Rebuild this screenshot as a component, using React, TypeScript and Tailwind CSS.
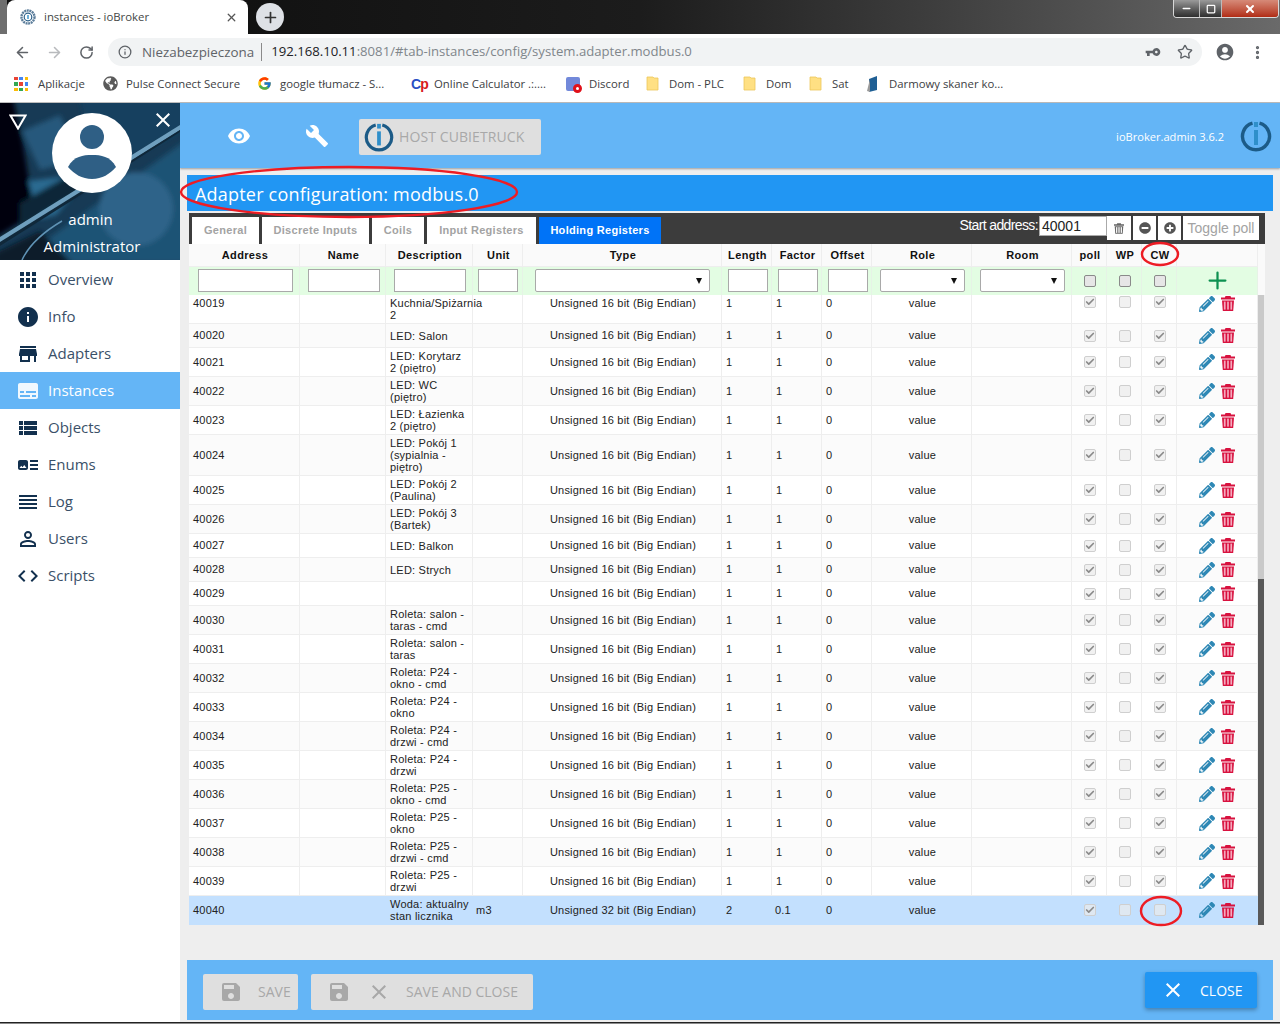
import { ArrowLeft, ArrowRight, RotateCw, Info, Star, EllipsisVertical, X, Plus, Check, Minus, Square } from "lucide-react"
import {
  MdAccountCircle,
  MdApps,
  MdArtTrack,
  MdBuild,
  MdClose,
  MdCode,
  MdInfo,
  MdPersonOutline,
  MdReorder,
  MdSave,
  MdStore,
  MdSubtitles,
  MdViewList,
  MdVisibility,
  MdVpnKey,
} from "react-icons/md"
import { FaGlobeAmericas, FaMinusCircle, FaPencilAlt, FaPlusCircle } from "react-icons/fa"
import { FcGoogle } from "react-icons/fc"

const COLS = "grid grid-cols-[111px_86px_87px_50px_199px_50px_50px_50px_100px_100px_35px_35px_35px_81px]"

type Row = { addr: string; desc: string[]; h: string; top?: boolean }

const rows: Row[] = [
  { addr: "40019", desc: ["Kuchnia/Spiżarnia", "2"], h: "h-[29px]", top: true },
  { addr: "40020", desc: ["LED: Salon"], h: "h-[24px]" },
  { addr: "40021", desc: ["LED: Korytarz", "2 (piętro)"], h: "h-[29px]" },
  { addr: "40022", desc: ["LED: WC", "(piętro)"], h: "h-[29px]" },
  { addr: "40023", desc: ["LED: Łazienka", "2 (piętro)"], h: "h-[29px]" },
  { addr: "40024", desc: ["LED: Pokój 1", "(sypialnia -", "piętro)"], h: "h-[41px]" },
  { addr: "40025", desc: ["LED: Pokój 2", "(Paulina)"], h: "h-[29px]" },
  { addr: "40026", desc: ["LED: Pokój 3", "(Bartek)"], h: "h-[29px]" },
  { addr: "40027", desc: ["LED: Balkon"], h: "h-[24px]" },
  { addr: "40028", desc: ["LED: Strych"], h: "h-[24px]" },
  { addr: "40029", desc: [], h: "h-[24px]" },
  { addr: "40030", desc: ["Roleta: salon -", "taras - cmd"], h: "h-[29px]" },
  { addr: "40031", desc: ["Roleta: salon -", "taras"], h: "h-[29px]" },
  { addr: "40032", desc: ["Roleta: P24 -", "okno - cmd"], h: "h-[29px]" },
  { addr: "40033", desc: ["Roleta: P24 -", "okno"], h: "h-[29px]" },
  { addr: "40034", desc: ["Roleta: P24 -", "drzwi - cmd"], h: "h-[29px]" },
  { addr: "40035", desc: ["Roleta: P24 -", "drzwi"], h: "h-[29px]" },
  { addr: "40036", desc: ["Roleta: P25 -", "okno - cmd"], h: "h-[29px]" },
  { addr: "40037", desc: ["Roleta: P25 -", "okno"], h: "h-[29px]" },
  { addr: "40038", desc: ["Roleta: P25 -", "drzwi - cmd"], h: "h-[29px]" },
  { addr: "40039", desc: ["Roleta: P25 -", "drzwi"], h: "h-[29px]" },
]

const menu = [
  { label: "Overview", icon: <MdApps className="w-[24px] h-[24px]" /> },
  { label: "Info", icon: <MdInfo className="w-[24px] h-[24px]" /> },
  { label: "Adapters", icon: <MdStore className="w-[24px] h-[24px]" /> },
  { label: "Instances", icon: <MdSubtitles className="w-[24px] h-[24px]" />, active: true },
  { label: "Objects", icon: <MdViewList className="w-[24px] h-[24px]" /> },
  { label: "Enums", icon: <MdArtTrack className="w-[24px] h-[24px]" /> },
  { label: "Log", icon: <MdReorder className="w-[24px] h-[24px]" /> },
  { label: "Users", icon: <MdPersonOutline className="w-[24px] h-[24px]" /> },
  { label: "Scripts", icon: <MdCode className="w-[24px] h-[24px]" /> },
]

function Logo({ size }: { size: string }) {
  return (
    <svg viewBox="0 0 32 32" className={size}>
      <path d="M12.5 3.2a13.5 13.5 0 1 0 7 0" fill="none" stroke="#1c5b87" strokeWidth="3.4" />
      <rect x="14" y="10" width="4" height="15" fill="#2f8fca" />
      <rect x="14" y="2" width="4" height="5" fill="#2f8fca" />
    </svg>
  )
}

function Folder() {
  return (
    <svg viewBox="0 0 13 15" className="w-[13px] h-[15px]">
      <path d="M1 1h6l1 1h4v12H1z" fill="#ffe083" stroke="#ecc65a" strokeWidth="0.8" />
    </svg>
  )
}

function Trash({ className, stripe }: { className: string; stripe: string }) {
  return (
    <svg viewBox="0 0 14 15" className={className} fill="currentColor">
      <path d="M4.5 0h5l.6 1.4H14v2.2H0V1.4h3.9z" />
      <path d="M1 4.4h12L12.2 15H1.8z" />
      <rect x="2.9" y="5.6" width="1.7" height="8" fill={stripe} />
      <rect x="6.15" y="5.6" width="1.7" height="8" fill={stripe} />
      <rect x="9.4" y="5.6" width="1.7" height="8" fill={stripe} />
    </svg>
  )
}

function Bookmark({ w, icon, label, iconW = "w-[23px]" }: { w: string; icon: React.ReactNode; label: string; iconW?: string }) {
  return (
    <div className={`flex items-center shrink-0 ${w}`}>
      <div className={`flex items-center ${iconW}`}>{icon}</div>
      <span className="whitespace-nowrap">{label}</span>
    </div>
  )
}

function BrowserChrome() {
  return (
    <div className="font-['Open_Sans',sans-serif] text-[#444746]">
      <div className="h-[34px] flex bg-gradient-to-r from-[#0c0c0c] via-[#1c1c1c] to-[#6a6a6a]">
        <div className="w-[7px] bg-[#6e6e6e]" />
        <div className="w-[241px] bg-white rounded-t-[8px] flex items-center pl-[13px] pr-[10px] text-[11.4px]">
          <svg viewBox="0 0 16 16" className="w-[16px] h-[16px] mr-[8px]">
            <circle cx="8" cy="8" r="6.5" fill="none" stroke="#5e7f9c" strokeWidth="2.4" strokeDasharray="2 0.6" />
            <circle cx="8" cy="8" r="3.8" fill="none" stroke="#2a5f89" strokeWidth="1.2" />
            <rect x="7.3" y="6" width="1.4" height="4" fill="#2f8fca" />
          </svg>
          <span className="flex-1">instances - ioBroker</span>
          <X className="w-[13px] h-[13px] text-[#555]" strokeWidth={2.4} />
        </div>
        <div className="ml-[8px] mt-[3px] w-[28px] h-[28px] rounded-full bg-[#dee1e6] flex items-center justify-center">
          <Plus className="w-[17px] h-[17px] text-[#333]" strokeWidth={2.4} />
        </div>
        <div className="flex-1" />
        <div className="w-[106px] mr-[1px] h-[18px] flex rounded-b-[4px] border border-t-0 border-[#d8d8d8] overflow-hidden">
          <div className="w-[26px] bg-gradient-to-b from-[#9a9a9a] to-[#2f2f2f] flex items-center justify-center border-r border-[#bbb]">
            <Minus className="w-[11px] h-[11px] text-white" strokeWidth={3.5} />
          </div>
          <div className="w-[22px] bg-gradient-to-b from-[#9a9a9a] to-[#2f2f2f] flex items-center justify-center border-r border-[#bbb]">
            <Square className="w-[10px] h-[10px] text-white" strokeWidth={3} />
          </div>
          <div className="flex-1 bg-gradient-to-b from-[#d68a78] to-[#b02a12] flex items-center justify-center">
            <X className="w-[12px] h-[12px] text-white" strokeWidth={4} />
          </div>
        </div>
      </div>
      <div className="h-[34px] bg-white flex items-center pl-[14px] pr-[14px] pt-[2px]">
        <ArrowLeft className="w-[17px] h-[17px] text-[#5f6368]" strokeWidth={2.2} />
        <ArrowRight className="w-[17px] h-[17px] text-[#b8babd] ml-[15px]" strokeWidth={2.2} />
        <RotateCw className="w-[15px] h-[15px] text-[#5f6368] ml-[16px]" strokeWidth={2.4} />
        <div className="ml-[14px] w-[1095px] h-[28px] rounded-full bg-[#f1f3f4] flex items-center pl-[10px] pr-[9px]">
          <Info className="w-[14px] h-[14px] text-[#5f6368]" strokeWidth={2.2} />
          <span className="ml-[10px] text-[#5f6368] text-[13.4px]">Niezabezpieczona</span>
          <span className="ml-[7px] w-px h-[18px] bg-[#8a8a8a]" />
          <span className="ml-[9px] text-[#202124] text-[13.15px]">192.168.10.11</span>
          <span className="text-[#80868b] text-[13.15px]">:8081/#tab-instances/config/system.adapter.modbus.0</span>
          <div className="flex-1" />
          <MdVpnKey className="w-[16px] h-[16px] text-[#5f6368] -scale-x-100" />
          <Star className="w-[16px] h-[16px] text-[#5f6368] ml-[16px]" strokeWidth={2} />
        </div>
        <MdAccountCircle className="w-[20px] h-[20px] text-[#5f6368] ml-[13px]" />
        <EllipsisVertical className="w-[17px] h-[17px] text-[#5f6368] ml-[14px]" strokeWidth={2.6} />
      </div>
      <div className="h-[35px] bg-white flex items-center pl-[14px] pb-[2px] text-[11.35px] text-[#3c4043] border-b border-[#bdbdbd]">
        <Bookmark
          w="w-[89px]"
          iconW="w-[24px]"
          label="Aplikacje"
          icon={
            <div className="grid grid-cols-3 gap-[2px] w-[14px]">
              <i className="w-[3.5px] h-[3.5px] bg-[#ea4335]" />
              <i className="w-[3.5px] h-[3.5px] bg-[#4285f4]" />
              <i className="w-[3.5px] h-[3.5px] bg-[#fbbc05]" />
              <i className="w-[3.5px] h-[3.5px] bg-[#34a853]" />
              <i className="w-[3.5px] h-[3.5px] bg-[#ea4335]" />
              <i className="w-[3.5px] h-[3.5px] bg-[#4285f4]" />
              <i className="w-[3.5px] h-[3.5px] bg-[#fbbc05]" />
              <i className="w-[3.5px] h-[3.5px] bg-[#34a853]" />
              <i className="w-[3.5px] h-[3.5px] bg-[#fbbc05]" />
            </div>
          }
        />
        <Bookmark w="w-[154px]" label="Pulse Connect Secure" icon={<FaGlobeAmericas className="w-[15px] h-[15px] text-[#5a5a5a]" />} />
        <Bookmark w="w-[154px]" label="google tłumacz - S..." icon={<FcGoogle className="w-[15px] h-[15px]" />} />
        <Bookmark
          w="w-[155px]"
          label="Online Calculator .:...."
          icon={
            <span className="font-['Liberation_Sans',sans-serif] font-bold text-[14px] leading-none tracking-[-1px]">
              <span className="text-[#2a4fc4]">C</span>
              <span className="text-[#d81c1c]">p</span>
            </span>
          }
        />
        <Bookmark
          w="w-[80px]"
          label="Discord"
          icon={
            <div className="relative w-[14px] h-[14px] rounded-[2px] bg-[#7289da]">
              <i className="absolute left-[7px] top-[7px] w-[9px] h-[9px] rounded-full bg-[#e0101a] border-[2px] border-[#e0101a]" />
              <i className="absolute left-[10px] top-[10px] w-[3px] h-[3px] rounded-full bg-white" />
            </div>
          }
        />
        <Bookmark w="w-[97px]" label="Dom - PLC" icon={<Folder />} />
        <Bookmark w="w-[66px]" label="Dom" icon={<Folder />} />
        <Bookmark w="w-[57px]" label="Sat" icon={<Folder />} />
        <Bookmark
          w="w-[150px]"
          label="Darmowy skaner ko..."
          icon={
            <svg viewBox="0 0 14 16" className="w-[14px] h-[16px]">
              <path d="M3 3l8-3v14l-8 2z" fill="#1f5f94" />
              <path d="M1 15l3-12v13z" fill="#9a9a9a" />
            </svg>
          }
        />
      </div>
    </div>
  )
}

function SidebarHead() {
  return (
    <div className="relative h-[157px] overflow-hidden flex flex-col items-center">
      <svg viewBox="0 0 180 157" className="absolute inset-0 w-full h-full">
        <defs>
          <filter id="soft">
            <feGaussianBlur stdDeviation="2.5" />
          </filter>
        </defs>
        <rect width="180" height="157" fill="#173a55" />
        <g filter="url(#soft)">
          <path d="M-5-5h18l10 45 8 50-12 30-24 15z" fill="#02060b" />
          <path d="M22 28l38-16 20 45-40 10z" fill="#25597c" />
          <path d="M80-5h105v30L130 55 92 62z" fill="#16405e" />
          <path d="M28 78l32-4 20 10-24 28-16 4z" fill="#2a6a91" />
          <path d="M20 100L90 60l30 5-100 60z" fill="#0c2538" />
          <path d="M14 160L185 38v122z" fill="#1d5275" />
          <circle cx="136" cy="106" r="37" fill="#2f6389" />
          <path d="M-5 150l45-22 34 34H-5z" fill="#071a2a" />
        </g>
        <path d="M0 134L180 22v5L0 141z" fill="#6f9fbe" />
        <path d="M0 139L180 27v2L0 143z" fill="#10283a" />
        <path d="M22 157C30 140 45 128 62 118" fill="none" stroke="#5f93b5" strokeWidth="1.5" />
      </svg>
      <svg viewBox="0 0 18 16" className="absolute left-[9px] top-[11px] w-[18px] h-[16px]">
        <path d="M1.5 1.5h15L9 14.5z" fill="none" stroke="#fff" strokeWidth="2" />
      </svg>
      <MdClose className="absolute right-[5px] top-[5px] w-[24px] h-[24px] text-white" />
      <svg viewBox="0 0 80 80" className="relative mt-[10px] ml-[4px] w-[80px] h-[80px] shrink-0">
        <circle cx="40" cy="40" r="40" fill="#fff" />
        <circle cx="40" cy="24" r="12" fill="#2f5f85" />
        <path d="M16 54C22 43 31 42 40 42s18 1 24 12C58 61 50 66 40 66S22 61 16 54z" fill="#2f5f85" />
      </svg>
      <div className="relative mt-[16px] ml-[1px] text-[15px] leading-[20px] text-white">admin</div>
      <div className="relative mt-[7px] ml-[4px] text-[15px] leading-[20px] text-white">Administrator</div>
    </div>
  )
}

function Sidebar() {
  return (
    <div className="w-[180px] shrink-0 bg-white font-['Open_Sans',sans-serif]">
      <SidebarHead />
      <div className="pt-[1px]">
        {menu.map((m) => (
          <div
            key={m.label}
            className={`h-[37px] flex items-center pl-[16px] text-[15px] ${
              m.active ? "bg-[#64b5f6] text-white" : "text-[#3a5068]"
            }`}
          >
            <span className={`w-[32px] flex ${m.active ? "text-white/90" : "text-[#12304e]"}`}>{m.icon}</span>
            {m.label}
          </div>
        ))}
      </div>
    </div>
  )
}

function Tab({ w, label, active }: { w: string; label: string; active?: boolean }) {
  return (
    <div
      className={`h-[27px] flex items-center justify-center font-bold tracking-[0.3px] ${w} ${
        active ? "bg-[#0073f7] text-white" : "bg-white text-[#a3a3a3]"
      }`}
    >
      {label}
    </div>
  )
}

function ToolBtn({ w, children }: { w: string; children: React.ReactNode }) {
  return <div className={`h-[24px] bg-white flex items-center justify-center ${w}`}>{children}</div>
}

function Th({ label }: { label?: string }) {
  return (
    <div className="flex items-center justify-center pl-[2px] border-r border-b border-[#eeeeee] font-bold tracking-[0.35px] text-[#111]">
      {label}
    </div>
  )
}

function FilterInput({ w }: { w: string }) {
  return <div className={`h-[23px] bg-white border border-[#a9a9a9] ${w}`} />
}

function FilterSelect({ w }: { w: string }) {
  return (
    <div className={`h-[23px] bg-white border border-[#a9a9a9] rounded-[2px] flex items-center justify-end pr-[7px] ${w}`}>
      <i className="w-0 h-0 border-x-[3.5px] border-x-transparent border-t-[6px] border-t-[#111]" />
    </div>
  )
}

function FilterCell({ children, className }: { children?: React.ReactNode; className?: string }) {
  return <div className={`flex border-r border-b border-[#e6f3e6] items-center pb-[1px] ${className ?? ""}`}>{children}</div>
}

function Box({ checked, head }: { checked?: boolean; head?: boolean }) {
  if (head) return <div className="w-[12px] h-[12px] rounded-[2px] bg-[#e6e6e6] border border-[#8a8a8a]" />
  return (
    <div className="w-[12px] h-[12px] rounded-[2px] bg-[#ebebeb]/70 border border-[#cfcfcf] flex items-center justify-center">
      {checked && <Check className="w-[10px] h-[10px] text-[#8a8a8a]" strokeWidth={4} />}
    </div>
  )
}

function RowCells({ r, alt, selected, unit, type, len, factor }: {
  r: Row
  alt: boolean
  selected?: boolean
  unit?: string
  type: string
  len: string
  factor: string
}) {
  const bg = selected ? "bg-[#c3e0fe]" : alt ? "bg-[#fbfbfb]" : "bg-white"
  const line = selected ? "border-[#c3e0fe]" : "border-[#eeeeee]"
  const base = `flex border-r border-b ${line}`
  const text = `${base} ${r.top ? "items-start" : "items-center"}`
  const box = `${base} justify-center pl-[2px] ${r.top ? "items-start pt-[1px]" : "items-center"}`
  return (
    <div className={`${COLS} ${r.h} ${bg} text-[#222]`}>
      <div className={`${text} pl-[4px]`}>{r.addr}</div>
      <div className={text} />
      <div className={`${base} items-center pl-[4px] leading-[12px] whitespace-nowrap`}>
        <div>
          {r.desc.map((d) => (
            <div key={d}>{d}</div>
          ))}
        </div>
      </div>
      <div className={`${text} pl-[3px]`}>{unit}</div>
      <div className={`${text} justify-center pl-[2px]`}>{type}</div>
      <div className={`${text} pl-[4px]`}>{len}</div>
      <div className={`${text} ${factor === "1" ? "pl-[4px]" : "pl-[3px]"}`}>{factor}</div>
      <div className={`${text} pl-[4px]`}>0</div>
      <div className={`${text} justify-center pl-[2px]`}>value</div>
      <div className={text} />
      <div className={box}>
        <Box checked />
      </div>
      <div className={box}>
        <Box />
      </div>
      <div className={box}>
        <Box checked={!selected} />
      </div>
      <div className={`${base} pl-[22px] gap-[6px] ${r.top ? "items-start pt-[1px]" : "items-center"}`}>
        <FaPencilAlt className="w-[16px] h-[16px] text-[#2e88b5]" />
        <Trash className="w-[14px] h-[15px] text-[#d8123f]" stripe="#f4a9bd" />
      </div>
    </div>
  )
}

function RegisterTable() {
  return (
    <div className="mt-[2px] ml-[9px] w-[1076px] font-['Liberation_Sans',sans-serif] text-[11px] tracking-[0.22px]">
      <div className="h-[31px] bg-[#3c3c3c] flex justify-between pl-[3px] pt-[4px]">
        <div className="flex gap-[3px]">
          <Tab w="w-[67px]" label="General" />
          <Tab w="w-[107px]" label="Discrete Inputs" />
          <Tab w="w-[52px]" label="Coils" />
          <Tab w="w-[109px]" label="Input Registers" />
          <Tab w="w-[122px]" label="Holding Registers" active />
        </div>
        <div className="flex gap-[2px] pr-[6px] -mt-[1px] tracking-normal">
          <div className="flex h-[20px] items-center mr-[-2px]">
            <span className="text-white text-[14px] tracking-[-0.62px] -mt-[2px]">Start address:</span>
            <div className="ml-[1px] w-[68px] h-[20px] bg-white border border-[#aaa] text-[14px] leading-[18px] pl-[2px] text-[#222]">
              40001
            </div>
          </div>
          <ToolBtn w="w-[24px]">
            <Trash className="w-[10px] h-[11px] text-[#666]" stripe="#ffffff" />
          </ToolBtn>
          <ToolBtn w="w-[23px]">
            <FaMinusCircle className="w-[12px] h-[12px] text-[#555]" />
          </ToolBtn>
          <ToolBtn w="w-[23px]">
            <FaPlusCircle className="w-[12px] h-[12px] text-[#555]" />
          </ToolBtn>
          <ToolBtn w="w-[76px]">
            <span className="text-[14px] text-[#a3a3a3]">Toggle poll</span>
          </ToolBtn>
        </div>
      </div>
      <div className="flex bg-[#fafafa]">
        <div className={`${COLS} w-[1069px] h-[23px]`}>
          <Th label="Address" />
          <Th label="Name" />
          <Th label="Description" />
          <Th label="Unit" />
          <Th label="Type" />
          <Th label="Length" />
          <Th label="Factor" />
          <Th label="Offset" />
          <Th label="Role" />
          <Th label="Room" />
          <Th label="poll" />
          <Th label="WP" />
          <Th label="CW" />
          <Th />
        </div>
      </div>
      <div className="flex bg-[#fafafa]">
        <div className={`${COLS} w-[1069px] h-[28px] bg-[#e3fde3]`}>
          <FilterCell className="pl-[9px]"><FilterInput w="w-[95px]" /></FilterCell>
          <FilterCell className="pl-[8px]"><FilterInput w="w-[72px]" /></FilterCell>
          <FilterCell className="pl-[8px]"><FilterInput w="w-[72px]" /></FilterCell>
          <FilterCell className="pl-[5px]"><FilterInput w="w-[40px]" /></FilterCell>
          <FilterCell className="pl-[12px]"><FilterSelect w="w-[175px]" /></FilterCell>
          <FilterCell className="pl-[6px]"><FilterInput w="w-[40px]" /></FilterCell>
          <FilterCell className="pl-[6px]"><FilterInput w="w-[40px]" /></FilterCell>
          <FilterCell className="pl-[6px]"><FilterInput w="w-[40px]" /></FilterCell>
          <FilterCell className="pl-[8px]"><FilterSelect w="w-[85px]" /></FilterCell>
          <FilterCell className="pl-[8px]"><FilterSelect w="w-[85px]" /></FilterCell>
          <FilterCell className="justify-center pl-[2px]"><Box head /></FilterCell>
          <FilterCell className="justify-center pl-[2px]"><Box head /></FilterCell>
          <FilterCell className="justify-center pl-[2px]"><Box head /></FilterCell>
          <FilterCell className="pl-[27px]">
            <Plus className="w-[27px] h-[27px] text-[#0d9151]" strokeWidth={2} />
          </FilterCell>
        </div>
      </div>
      <div className="flex items-stretch">
        <div className="w-[1069px]">
          {rows.map((r, i) => (
            <RowCells key={r.addr} r={r} alt={i % 2 === 1} type="Unsigned 16 bit (Big Endian)" len="1" factor="1" />
          ))}
          <RowCells
            r={{ addr: "40040", desc: ["Woda: aktualny", "stan licznika"], h: "h-[29px]" }}
            alt={false}
            selected
            unit="m3"
            type="Unsigned 32 bit (Big Endian)"
            len="2"
            factor="0.1"
          />
        </div>
        <div className="w-[6px] bg-[#585858]">
          <div className="h-[284px] bg-[#c9c9c9]" />
        </div>
      </div>
    </div>
  )
}

function MainPane() {
  return (
    <div className="flex-1 min-w-0 bg-[#eeeeee] flex flex-col">
      <div className="h-[65px] bg-[#64b5f6] shadow-[0_1px_2px_rgba(0,0,0,0.35)] flex items-center font-['Open_Sans',sans-serif]">
        <MdVisibility className="ml-[47px] w-[24px] h-[24px] text-white" />
        <MdBuild className="ml-[54px] w-[24px] h-[24px] text-white" />
        <div className="ml-[30px] mt-[2px] w-[182px] h-[36px] bg-[#dfdfdf] rounded-[2px] flex items-center pl-[5px] text-[14px] text-[#a8a8a8]">
          <Logo size="w-[30px] h-[30px]" />
          <span className="ml-[5px] tracking-[0.1px]">HOST CUBIETRUCK</span>
        </div>
        <div className="flex-1" />
        <span className="mt-[3px] text-[11.1px] text-white">ioBroker.admin 3.6.2</span>
        <div className="ml-[16px] mr-[8px]">
          <Logo size="w-[32px] h-[32px]" />
        </div>
      </div>
      <div className="mt-[7px] ml-[7px] w-[1086px] h-[36px] bg-[#2196f3] flex items-center pl-[8px] pt-[2px] text-white text-[18px] tracking-[0.2px] font-['Open_Sans',sans-serif]">
        Adapter configuration: modbus.0
      </div>
      <RegisterTable />
      <div className="mt-[35px] ml-[7px] w-[1086px] h-[60px] bg-[#64b5f6] flex items-center pl-[16px] pr-[16px] text-[14px] font-['Open_Sans',sans-serif]">
        <div className="mt-[3px] w-[95px] h-[36px] bg-[#dfdfdf] rounded-[2px] flex items-center pl-[16px] text-[#a8a8a8]">
          <MdSave className="w-[24px] h-[24px]" />
          <span className="ml-[15px]">SAVE</span>
        </div>
        <div className="mt-[3px] ml-[13px] w-[222px] h-[36px] bg-[#dfdfdf] rounded-[2px] flex items-center pl-[16px] text-[#a8a8a8]">
          <MdSave className="w-[24px] h-[24px]" />
          <MdClose className="ml-[16px] w-[24px] h-[24px]" />
          <span className="ml-[15px]">SAVE AND CLOSE</span>
        </div>
        <div className="flex-1" />
        <div className="w-[112px] h-[36px] bg-[#2196f3] rounded-[2px] shadow-[0_2px_4px_rgba(0,0,0,0.3)] flex items-center pl-[16px] text-white">
          <MdClose className="w-[24px] h-[24px]" />
          <span className="ml-[15px]">CLOSE</span>
        </div>
      </div>
    </div>
  )
}

export default function App() {
  return (
    <div className="relative w-[1280px] h-[1024px] overflow-hidden flex flex-col bg-white">
      <BrowserChrome />
      <div className="flex-1 min-h-0 flex">
        <Sidebar />
        <MainPane />
      </div>
      <div className="h-[2px] shrink-0 border-t border-[#222] bg-[#8a8a8a]" />
      <svg viewBox="0 0 1280 1024" className="absolute inset-0 w-full h-full pointer-events-none" fill="none" stroke="#ed1c24" strokeWidth="2.4">
        <ellipse cx="349" cy="192" rx="168" ry="25" />
        <ellipse cx="1160" cy="254" rx="18" ry="11" />
        <ellipse cx="1161" cy="911" rx="20" ry="14" />
      </svg>
    </div>
  )
}
